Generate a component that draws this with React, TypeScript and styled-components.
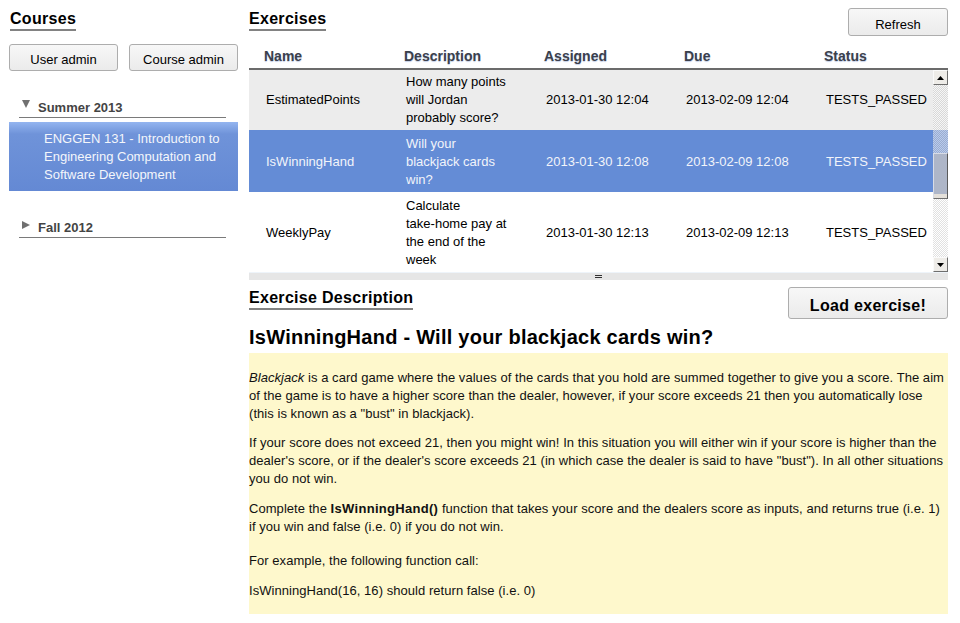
import React from 'react';
import styled, { createGlobalStyle } from 'styled-components';

const GlobalStyle = createGlobalStyle`
  html, body {
    margin: 0;
    padding: 0;
    background: #fff;
  }
  body {
    font-family: "Liberation Sans", Arial, sans-serif;
    font-size: 13px;
    color: #000;
  }
`;

const exercises = [
  {
    name: 'EstimatedPoints',
    description: 'How many points will Jordan probably score?',
    assigned: '2013-01-30 12:04',
    due: '2013-02-09 12:04',
    status: 'TESTS_PASSED',
  },
  {
    name: 'IsWinningHand',
    description: 'Will your blackjack cards win?',
    assigned: '2013-01-30 12:08',
    due: '2013-02-09 12:08',
    status: 'TESTS_PASSED',
  },
  {
    name: 'WeeklyPay',
    description: 'Calculate take-home pay at the end of the week',
    assigned: '2013-01-30 12:13',
    due: '2013-02-09 12:13',
    status: 'TESTS_PASSED',
  },
];

const SELECTED = 'IsWinningHand';
const HOVERED = 'EstimatedPoints';

const noHyphenBreak = (text: string) =>
  text.split(' ').map((word, i) => (
    <React.Fragment key={i}>
      {i > 0 && ' '}
      {word.includes('-') ? <Nowrap>{word}</Nowrap> : word}
    </React.Fragment>
  ));

const App = () => {
  return (
    <>
      <GlobalStyle />
      <Page>
        <Sidebar>
          <Heading $indent={1}>Courses</Heading>
          <AdminButtons>
            <Button $w={109} $h={27}>User admin</Button>
            <Button $w={109} $h={27}>Course admin</Button>
          </AdminButtons>

          <Term $gap={28}>
            <TermHeader>
              <Arrow $open />
              Summer 2013
            </TermHeader>
            <CourseItem $selected>
              ENGGEN 131 - Introduction to Engineering Computation and Software
              Development
            </CourseItem>
          </Term>

          <Term $gap={28}>
            <TermHeader>
              <Arrow />
              Fall 2012
            </TermHeader>
          </Term>
        </Sidebar>

        <Main>
          <TopRow>
            <Heading>Exercises</Heading>
            <Button $w={100} $h={28}>Refresh</Button>
          </TopRow>

          <TableHead>
            <HeadCell>Name</HeadCell>
            <HeadCell>Description</HeadCell>
            <HeadCell>Assigned</HeadCell>
            <HeadCell>Due</HeadCell>
            <HeadCell>Status</HeadCell>
          </TableHead>

          <Viewport>
            <Rows>
              {exercises.map((ex) => (
                <Row
                  key={ex.name}
                  $selected={ex.name === SELECTED}
                  $hover={ex.name === HOVERED}
                >
                  <Cell>{ex.name}</Cell>
                  <Cell $wrap>{noHyphenBreak(ex.description)}</Cell>
                  <Cell>{ex.assigned}</Cell>
                  <Cell>{ex.due}</Cell>
                  <Cell>{ex.status}</Cell>
                </Row>
              ))}
            </Rows>
            <ScrollBar>
              <ScrollArrow>
                <svg width="7" height="4" viewBox="0 0 7 4">
                  <path d="M0 4 L3.5 0 L7 4 Z" fill="#000" />
                </svg>
              </ScrollArrow>
              <Track>
                <Thumb />
              </Track>
              <ScrollArrow>
                <svg width="7" height="4" viewBox="0 0 7 4">
                  <path d="M0 0 L3.5 4 L7 0 Z" fill="#000" />
                </svg>
              </ScrollArrow>
            </ScrollBar>
          </Viewport>

          <Splitter>
            <Grip />
          </Splitter>

          <DescRow>
            <Heading>Exercise Description</Heading>
            <Button $w={160} $h={32} $big>
              Load exercise!
            </Button>
          </DescRow>

          <Title>IsWinningHand - Will your blackjack cards win?</Title>

          <DescriptionBox>
            <Para>
              <em>Blackjack</em> is a card game where the values of the cards
              that you hold are summed together to give you a score. The aim of
              the game is to have a higher score than the dealer, however, if
              your score exceeds 21 then you automatically lose (this is known
              as a "bust" in blackjack).
            </Para>
            <Para $gap={11}>
              If your score does not exceed 21, then you might win! In this
              situation you will either win if your score is higher than the
              dealer's score, or if the dealer's score exceeds 21 (in which case
              the dealer is said to have "bust"). In all other situations you do
              not win.
            </Para>
            <Para>
              Complete the <Code>IsWinningHand()</Code> function that takes
              your score and the dealers score as inputs, and returns true (i.e.
              1) if you win and false (i.e. 0) if you do not win.
            </Para>
            <Para $gap={16}>For example, the following function call:</Para>
            <Para>IsWinningHand(16, 16) should return false (i.e. 0)</Para>
          </DescriptionBox>
        </Main>
      </Page>
    </>
  );
};

export default App;

// Layout
const Page = styled.div`
  display: flex;
  gap: 11px;
  width: 960px;
  box-sizing: border-box;
  padding: 8px 12px 0 9px;
`;

const Sidebar = styled.div`
  width: 229px;
  flex-shrink: 0;
  display: flex;
  flex-direction: column;
  align-items: flex-start;
`;

const Main = styled.div`
  flex: 1;
  min-width: 0;
  display: flex;
  flex-direction: column;
`;

// Widgets
const Heading = styled.h2<{ $indent?: number }>`
  display: inline-block;
  margin: 2px 0 0 ${(p) => p.$indent ?? 0}px;
  padding: 0 0 1px;
  font-size: 16px;
  line-height: 18px;
  font-weight: bold;
  letter-spacing: 0.3px;
  color: #000;
  border-bottom: 2px solid #828282;
`;

const Button = styled.button<{ $w: number; $h: number; $big?: boolean }>`
  width: ${(p) => p.$w}px;
  height: ${(p) => p.$h}px;
  padding: ${(p) => (p.$big ? 5 : 4)}px 0 0;
  box-sizing: border-box;
  font-family: "Liberation Sans", Arial, sans-serif;
  font-size: ${(p) => (p.$big ? 16 : 13)}px;
  font-weight: ${(p) => (p.$big ? 'bold' : 'normal')};
  letter-spacing: ${(p) => (p.$big ? 0.3 : 0)}px;
  color: #000;
  background: linear-gradient(#f7f7f7, #ebebeb);
  border: 1px solid #adadad;
  border-radius: 3px;
  cursor: pointer;
`;

const AdminButtons = styled.div`
  display: flex;
  gap: 11px;
  margin-top: 13px;
`;

const Term = styled.div<{ $gap: number }>`
  width: 100%;
  margin-top: ${(p) => p.$gap}px;
`;

const TermHeader = styled.div`
  position: relative;
  display: flex;
  align-items: center;
  height: 19px;
  box-sizing: border-box;
  margin: 0 12px 4px 10px;
  padding: 0 0 2px 19px;
  font-size: 13px;
  font-weight: bold;
  color: #444;
  border-bottom: 1px solid #7a7a7a;
`;

const Arrow = styled.span<{ $open?: boolean }>`
  position: absolute;
  left: 3px;
  top: ${(p) => (p.$open ? 1 : 2)}px;
  width: 0;
  height: 0;
  ${(p) =>
    p.$open
      ? `border-left: 4.5px solid transparent;
         border-right: 4.5px solid transparent;
         border-top: 8px solid #707070;`
      : `border-top: 4.5px solid transparent;
         border-bottom: 4.5px solid transparent;
         border-left: 8px solid #707070;`}
`;

const CourseItem = styled.div<{ $selected?: boolean }>`
  padding: 8px 10px 7px 35px;
  line-height: 18px;
  font-size: 13px;
  color: ${(p) => (p.$selected ? '#f4f6fb' : '#000')};
  background: ${(p) =>
    p.$selected
      ? 'linear-gradient(#94b5f0 0px, #6f93d9 12px, #6489d4 100%)'
      : 'transparent'};
`;

const TopRow = styled.div`
  display: flex;
  justify-content: space-between;
  align-items: flex-start;
  height: 28px;
`;

const columns = '140px 140px 140px 140px 139px';

const TableHead = styled.div`
  display: grid;
  grid-template-columns: ${columns};
  border-bottom: 2px solid #6b6b6b;
`;

const HeadCell = styled.div`
  padding: 12px 0 4px 15px;
  line-height: 16px;
  font-size: 14px;
  font-weight: bold;
  color: #3b404c;
  text-shadow: 0 1px 1px #c3cfe8;
`;

const Viewport = styled.div`
  position: relative;
  height: 202px;
  overflow: hidden;
`;

const Rows = styled.div`
  margin-top: -2px;
`;

const Row = styled.div<{ $selected?: boolean; $hover?: boolean }>`
  display: grid;
  grid-template-columns: ${columns};
  align-items: center;
  background: ${(p) =>
    p.$selected ? '#648cd6' : p.$hover ? '#ececec' : '#fff'};
  color: ${(p) => (p.$selected ? '#f2f4fa' : '#000')};
`;

const Cell = styled.div<{ $wrap?: boolean }>`
  padding: 5px ${(p) => (p.$wrap ? 20 : 0)}px 3px 17px;
  line-height: 18px;
  font-size: 13px;
  white-space: ${(p) => (p.$wrap ? 'normal' : 'nowrap')};
`;

const Nowrap = styled.span`
  white-space: nowrap;
`;

const ScrollBar = styled.div`
  position: absolute;
  top: 0;
  right: 0;
  bottom: 0;
  width: 15px;
  display: flex;
  flex-direction: column;
`;

const ScrollArrow = styled.div`
  width: 15px;
  height: 15px;
  box-sizing: border-box;
  display: flex;
  align-items: center;
  justify-content: center;
  background: #eeece8;
  border: 1px solid;
  border-color: #fafafa #6e6e6e #6e6e6e #fafafa;
`;

const Track = styled.div`
  flex: 1;
  padding-top: 68px;
  background: repeating-conic-gradient(
      rgba(200, 200, 200, 0.55) 0 25%,
      rgba(255, 255, 255, 0.55) 0 50%
    )
    0 0 / 2px 2px;
`;

const Thumb = styled.div`
  height: 46px;
  box-sizing: border-box;
  background: linear-gradient(#aeb6c8 0, #aeb6c8 40px, #e4e0da 40px);
  border: 1px solid;
  border-color: #d8dce6 #5a5a5a #6e6e6e #d8dce6;
`;

const Splitter = styled.div`
  height: 8px;
  box-sizing: border-box;
  background: #e6e6e6;
  border-top: 1px solid #eef4fa;
  display: flex;
  align-items: center;
  justify-content: center;
`;

const Grip = styled.div`
  width: 7px;
  height: 1px;
  border-top: 1px solid #333;
  border-bottom: 1px solid #333;
`;

const DescRow = styled.div`
  display: flex;
  justify-content: space-between;
  align-items: flex-start;
  margin-top: 7px;
`;

const Title = styled.h1`
  margin: 6px 0 4px;
  font-size: 20px;
  line-height: 24px;
  font-weight: bold;
  letter-spacing: 0.25px;
  color: #000;
`;

const DescriptionBox = styled.div`
  background: #fef8cc;
  padding: 4px 0 2px;
  color: #111;
`;

const Para = styled.p<{ $gap?: number }>`
  margin: ${(p) => p.$gap ?? 12}px 0 0;
  line-height: 18px;
  font-size: 13px;
  letter-spacing: 0.05px;

  &:last-child {
    margin-bottom: 12px;
  }
`;

const Code = styled.strong`
  letter-spacing: 0.3px;
`;
